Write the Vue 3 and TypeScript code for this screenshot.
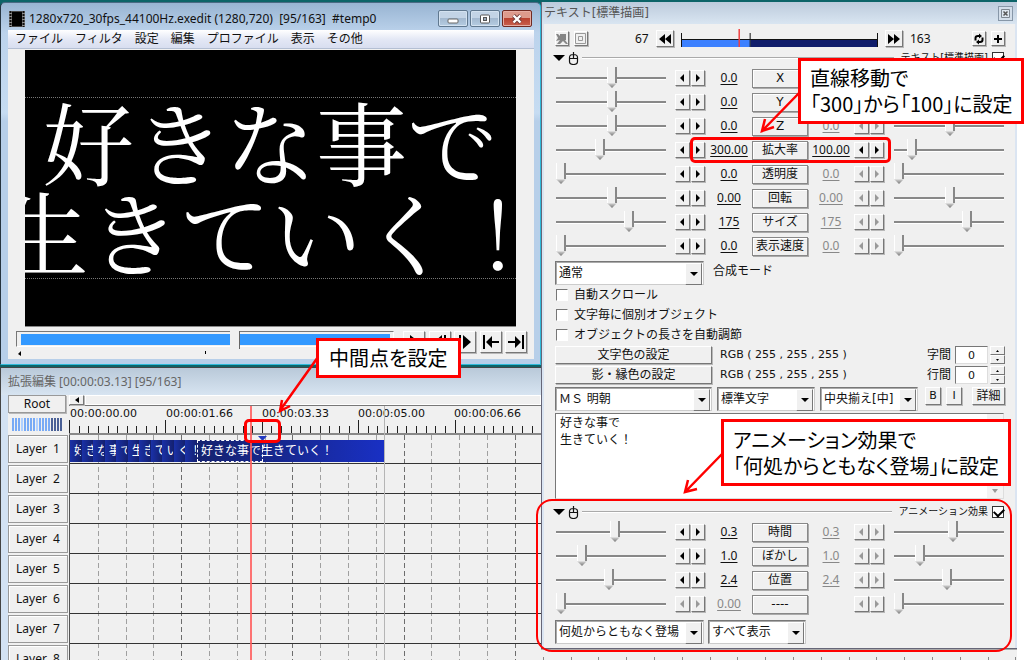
<script setup lang="ts">
import { ref } from 'vue'

interface Param {
  name: string
  left: string
  right: string
  leftPos: number
  rightPos: number
  leftOn: boolean
  rightOn: boolean
}

const p = (name: string, left: string, right: string, leftPos: number, rightPos: number, leftOn = true, rightOn = false): Param =>
  ({ name, left, right, leftPos, rightPos, leftOn, rightOn })

const drawParams = ref<Param[]>([
  p('X', '0.0', '0.0', 51, 51),
  p('Y', '0.0', '0.0', 51, 51),
  p('Z', '0.0', '0.0', 51, 51),
  p('拡大率', '300.00', '100.00', 39, 13, true, true),
  p('透明度', '0.0', '0.0', 0, 0),
  p('回転', '0.00', '0.00', 51, 51),
  p('サイズ', '175', '175', 68, 68),
  p('表示速度', '0.0', '0.0', 0, 0),
])

const animParams = ref<Param[]>([
  p('時間', '0.3', '0.3', 54, 54),
  p('ぼかし', '1.0', '1.0', 21, 21),
  p('位置', '2.4', '2.4', 48, 48),
  p('----', '0.00', '', 0, 0, false),
])

const sections = [
  { id: 'draw', params: drawParams },
  { id: 'anim', params: animParams },
]

const menus = ['ファイル', 'フィルタ', '設定', '編集', 'プロファイル', '表示', 'その他']
const checks = ['自動スクロール', '文字毎に個別オブジェクト', 'オブジェクトの長さを自動調節']
const colors = [
  { name: '文字色の設定', rgb: 'RGB ( 255 , 255 , 255 )', gap: '字間' },
  { name: '影・縁色の設定', rgb: 'RGB ( 255 , 255 , 255 )', gap: '行間' },
]
const times = ['00:00:00.00', '00:00:01.66', '00:00:03.33', '00:00:05.00', '00:00:06.66']
const layers = [1, 2, 3, 4, 5, 6, 7, 8]
const clipChars = [...'好きな事で生きていく！']
const ticks = Array.from({ length: 160 }, (_, i) => ({ x: Math.round(i * 9.64) + 1, major: i % 10 === 0 }))
const guides = Array.from({ length: 50 }, (_, i) => ({ x: Math.round((i + 1) * 27.8), strong: i % 4 === 3 }))
const gauge = Array.from({ length: 17 }, (_, i) => i)
</script>

<template>
  <main class="desktop">
    <div class="left">
      <section class="win preview">
        <header class="titlebar">
          <svg class="film" width="16" height="16" viewBox="0 0 16 16">
            <rect width="16" height="16" fill="#8c8c8c" />
            <rect x="3" y="1" width="10" height="14" fill="#000" />
            <path d="M1.5 0v16M14.5 0v16" stroke="#111" stroke-width="2" stroke-dasharray="2 1" />
            <path d="M3 .5h10M3 15.5h10" stroke="#444" />
          </svg>
          <h1>1280x720_30fps_44100Hz.exedit (1280,720)&nbsp; [95/163]&nbsp; #temp0</h1>
          <div class="sysbtns">
            <button aria-label="最小化"><svg width="12" height="10"><rect x="1" y="5" width="10" height="4" rx="1" fill="#fff" stroke="#666" /></svg></button>
            <button aria-label="最大化"><svg width="12" height="10"><rect x="1.5" y="1" width="9" height="8" rx="1" fill="#fff" stroke="#555" /><rect x="4.5" y="3.5" width="3" height="3" fill="#9ab" stroke="#555" /></svg></button>
            <button class="close" aria-label="閉じる"><svg width="12" height="10"><path d="M2.5 1.5l7 7M9.5 1.5l-7 7" stroke="#6b3a3a" stroke-width="4" /><path d="M2.5 1.5l7 7M9.5 1.5l-7 7" stroke="#fff" stroke-width="2.4" /></svg></button>
          </div>
        </header>
        <nav class="menu"><a v-for="m in menus" :key="m" href="#">{{ m }}</a></nav>
        <div class="client">
          <div class="canvas">
            <div class="frame">
              <p>好きな事で</p>
              <p>生きていく！</p>
            </div>
          </div>
          <div class="transport">
            <div class="seekbox">
              <input class="seek" type="range" min="0" max="163" value="95" aria-label="再生位置" />
              <svg class="marks" width="100%" height="10"><path d="M5 2v5l-3-2z" fill="#000" /><path d="M189.5 2v3" stroke="#000" /></svg>
            </div>
            <div class="plays">
              <button aria-label="再生"><svg width="20" height="20"><path d="M6 3l9 7-9 7z" /></svg></button>
              <button aria-label="前のフレーム"><svg width="20" height="20"><path d="M12 3v14l-8-7zM14 3h2v14h-2z" /></svg></button>
              <button class="tight" aria-label="次のフレーム"><svg width="20" height="20"><path d="M8 3v14l8-7zM4 3h2v14h-2z" /></svg></button>
              <button aria-label="先頭へ"><svg width="20" height="20"><path d="M2 3h2v14h-2zM5 10l6-6v5h7v2h-7v5z" /></svg></button>
              <button class="tight" aria-label="末尾へ"><svg width="20" height="20"><path d="M16 3h2v14h-2zM15 10l-6-6v5h-7v2h7v5z" /></svg></button>
            </div>
          </div>
        </div>
      </section>

      <section class="win timeline">
        <header class="tltitle"><h2>拡張編集 [00:00:03.13] [95/163]</h2></header>
        <div class="tlbody">
          <div class="side">
            <button class="root">Root</button>
            <div class="gauge"><i v-for="g in gauge" :key="g" :class="{ dark: g > 12, pale: g % 5 === 3 }"></i></div>
            <button v-for="n in layers" :key="n" class="layer">Layer&nbsp; {{ n }}</button>
          </div>
          <div class="tracks">
            <div class="hscroll"><button aria-label="左へスクロール"><svg width="8" height="8"><path d="M6 1v6l-4-3z" /></svg></button><span></span></div>
            <div class="ruler">
              <div class="times"><time v-for="t in times" :key="t">{{ t }}</time></div>
              <svg class="ticks" width="100%" height="13"><path v-for="t in ticks" :key="t.x" :d="`M${t.x - 0.5} ${t.major ? 0 : 6}V13`" stroke="#222" /></svg>
            </div>
            <div class="rows">
              <svg class="guides" width="100%" height="100%"><line v-for="g in guides" :key="g.x" :x1="g.x + 0.5" :x2="g.x + 0.5" y1="0" y2="600" :stroke="g.strong ? '#6d6d6d' : '#a0a0a0'" stroke-dasharray="5 3" /></svg>
              <div v-for="n in layers" :key="n" class="track" :class="{ first: n === 1 }">
                <div v-if="n === 1" class="clip">
                  <span class="seg"><b v-for="(c, i) in clipChars" :key="i"><em>{{ c }}</em></b></span>
                  <span class="tail"><span class="dash"></span>好きな事で生きていく！</span>
                </div>
              </div>
            </div>
            <svg class="cursor" width="100%" height="100%"><path d="M315.5 0V600" stroke="#b5b5b5" /><rect x="181" y="0" width="2" height="600" fill="#ff5c5c" fill-opacity=".85" /><path d="M189 30h9l-4.5 5z" fill="#2038c0" /></svg>
          </div>
        </div>
      </section>
    </div>

    <div class="right">
      <section class="panel">
        <header class="ptitle">
          <h2>テキスト[標準描画]</h2>
          <button aria-label="閉じる"><svg width="9" height="9"><path d="M.5.5h8v8h-8z" fill="#dde6ef" stroke="#7d8690" /><path d="M2.5 2.5l4 4M6.5 2.5l-4 4" stroke="#555" stroke-width="1.5" /></svg></button>
        </header>
        <div class="pbody">
          <div class="navrow">
            <button class="sq" aria-label="カメラ制御"><svg width="12" height="12"><path d="M0 1h2l2 2V1h6v6h-1l3 4h-2l-3-3-3 3H1l3-4L0 8l2-3z" fill="#858585" /></svg></button>
            <button class="sq" aria-label="上のオブジェクトでクリッピング"><svg width="12" height="12" fill="none" stroke="#999"><path d="M.5.5h10v10h-10zM3.5 3.5h4v4h-4z" /></svg></button>
            <output class="from">67</output>
            <button class="jump" aria-label="前の中間点"><svg width="14" height="14"><path d="M7 2v10l-6-5zM13 2v10l-6-5z" /></svg></button>
            <svg class="range" width="100%" height="19" viewBox="0 0 198 19" preserveAspectRatio="none">
              <path d="M0 10h70v8H0z" fill="#3c80ff" /><path d="M70 10h128v8H70z" fill="#101d6b" />
              <path d="M.5 4v14M69.5 4v14M197.5 4v14M0 10.5h198" stroke="#111" fill="none" /><path d="M58.5 0v18" stroke="#f04040" stroke-width="1.5" />
            </svg>
            <button class="jump" aria-label="次の中間点"><svg width="14" height="14"><path d="M1 2v10l6-5zM7 2v10l6-5z" /></svg></button>
            <output class="to">163</output>
            <button class="sq" aria-label="更新"><svg width="12" height="12" fill="none" stroke="#000" stroke-width="2"><path d="M2.5 7.5V5Q2.5 3 5 3H6M9.5 4.5V7Q9.5 9 7 9H6" /><path d="M6 .5v5l3-2.5zM6 6.5v5l-3-2.5z" fill="#000" stroke="none" /></svg></button>
            <button class="sq" aria-label="フィルタを追加"><svg width="12" height="12"><path d="M5 2h2v3h3v2h-3v3h-2v-3h-3v-2h3z" /></svg></button>
          </div>

          <template v-for="s in sections" :key="s.id">
            <div class="sechead">
              <svg width="28" height="14"><path d="M0 4h12l-6 6z" /><path d="M16.5 6.500q0-3 4-3t4 3v4q0 3-4 3t-4-3zM16.5 7.5h8M20.5 1v6" fill="none" stroke="#111" stroke-width="1.2" /></svg>
              <hr />
              <label :for="s.id + '-on'">{{ s.id === 'draw' ? 'テキスト[標準描画]' : 'アニメーション効果' }}</label>
              <input :id="s.id + '-on'" type="checkbox" checked />
            </div>
            <div v-for="r in s.params.value" :key="r.name" class="param">
              <input v-model="r.leftPos" class="slide" type="range" :aria-label="r.name + ' 開始'" />
              <span class="pair" :class="{ off: !r.leftOn }"><button :disabled="!r.leftOn" aria-label="減らす"><svg width="8" height="10"><path d="M6 1v8l-4-4z" /></svg></button><button :disabled="!r.leftOn" aria-label="増やす"><svg width="8" height="10"><path d="M2 1v8l4-4z" /></svg></button></span>
              <output :class="{ off: !r.leftOn }"><u>{{ r.left }}</u></output>
              <button class="pname">{{ r.name }}</button>
              <output :class="{ off: !r.rightOn }"><u>{{ r.right }}</u></output>
              <span class="pair" :class="{ off: !r.rightOn }"><button :disabled="!r.rightOn" aria-label="減らす"><svg width="8" height="10"><path d="M6 1v8l-4-4z" /></svg></button><button :disabled="!r.rightOn" aria-label="増やす"><svg width="8" height="10"><path d="M2 1v8l4-4z" /></svg></button></span>
              <input v-model="r.rightPos" class="slide" type="range" :aria-label="r.name + ' 終了'" />
            </div>

            <template v-if="s.id === 'draw'">
              <div class="blend">
                <span class="combo wide"><select id="blend"><option>通常</option></select></span>
                <label for="blend">合成モード</label>
              </div>
              <label v-for="c in checks" :key="c" class="check"><input type="checkbox" />{{ c }}</label>
              <div v-for="c in colors" :key="c.name" class="colorrow">
                <button class="pick">{{ c.name }}</button>
                <span class="rgb">{{ c.rgb }}</span>
                <label :for="c.gap">{{ c.gap }}</label>
                <input :id="c.gap" type="text" value="0" />
                <span class="spin"><button :aria-label="c.gap + ' 増'"><svg width="5" height="4"><path d="M1 3h3l-1.5-2z" /></svg></button><button :aria-label="c.gap + ' 減'"><svg width="5" height="4"><path d="M1 1h3l-1.5 2z" /></svg></button></span>
              </div>
              <div class="fontrow">
                <span class="combo face"><select aria-label="フォント"><option>ＭＳ 明朝</option></select></span>
                <span class="combo style"><select aria-label="文字装飾"><option>標準文字</option></select></span>
                <span class="combo style"><select aria-label="文字揃え"><option>中央揃え[中]</option></select></span>
                <button class="bi">B</button><button class="bi">I</button><button class="more">詳細</button>
              </div>
              <div class="editor">
                <textarea aria-label="テキスト">好きな事で
生きていく！</textarea>
                <div class="vscroll"><svg width="8" height="6"><path d="M1 5h6l-3-4z" /></svg><svg width="8" height="6"><path d="M1 1h6l-3 4z" /></svg></div>
              </div>
            </template>
          </template>

          <div class="animrow">
            <span class="combo wide"><select aria-label="効果の種類"><option>何処からともなく登場</option></select></span>
            <span class="combo style"><select aria-label="表示対象"><option>すべて表示</option></select></span>
          </div>
        </div>
      </section>
      <div class="under"><svg width="100%" height="14"><line v-for="g in guides" :key="g.x" :x1="g.x - 25.5" :x2="g.x - 25.5" y1="7" y2="11" stroke="#888" /></svg></div>
    </div>

    <aside class="notes">
      <div class="mark m1"></div>
      <div class="mark m2"></div>
      <div class="mark m3"></div>
      <p class="note n1">中間点を設定</p>
      <p class="note n2">直線移動で<br />「300」から「100」に設定</p>
      <p class="note n3">アニメーション効果で<br />「何処からともなく登場」に設定</p>
      <svg class="arrows" width="100%" height="100%" fill="none" stroke="#f00" stroke-width="2.5">
        <path d="M318 357L281 409M282 400L280 411L290 406" />
        <path d="M800 92L763 130M765 119L762 131L774 127" />
        <path d="M723 453L686 491M688 480L685 492L697 489" />
      </svg>
    </aside>
  </main>
</template>

<style>
html, body { margin: 0; background: #fff; }
</style>

<style scoped>
* { box-sizing: border-box; }
.desktop {
  position: relative; display: grid; grid-template-columns: minmax(0, 541fr) minmax(0, 476fr) 7px;
  height: 100vh; overflow: hidden; background: linear-gradient(90deg, transparent calc(100% - 7px), #fff 0), #0c6468;
  font: 12px/16px "DejaVu Sans", "Noto Sans CJK JP", sans-serif; color: #111;
}
h1, h2, p { margin: 0; font: inherit; }
button, input, select, textarea { margin: 0; padding: 0; font: inherit; color: inherit; border-radius: 0; }
button {
  display: flex; align-items: center; justify-content: center; background: #f0f0f0;
  border: 1px solid; border-color: #fff #777 #777 #fff; box-shadow: 1px 1px 0 #b8b8b8;
}
svg { display: block; flex: none; }
.left { display: flex; flex-direction: column; padding-top: 2px; gap: 2px; background: #0c6468; min-width: 0; }

/* preview window */
.preview {
  flex: none; border: 1px solid; border-color: #4a6a84 #2fb9d8 #2fb9d8 #26343f; border-radius: 5px 5px 0 0;
  padding: 0 6px 5px 7px; background: linear-gradient(#98b4d2, #bcd3ec 30px, #c6dcf2 110px, #b7cfe9 118px);
}
.titlebar { display: flex; align-items: center; height: 27px; padding-top: 4px; gap: 4px; }
.titlebar h1 { font-family: "Noto Sans", sans-serif; flex: 1; white-space: nowrap; }
.film { margin-left: 1px; }
.sysbtns { display: flex; gap: 2px; margin-right: 2px; }
.sysbtns button { width: 30px; height: 17px; border: 1px solid #60788f; border-radius: 2px; box-shadow: inset 0 0 0 1px #d3e2f0; background: linear-gradient(#c3d4e6 50%, #a3b9d0 50%, #b5cce2); }
.sysbtns .close { background: linear-gradient(#dd9a8c 50%, #b94230 50%, #c9604e); border-color: #702a22; box-shadow: inset 0 0 0 1px #e6ada3; }
.menu { display: flex; gap: 12px; height: 19px; padding: 1px 7px; background: linear-gradient(#fff, #e4e8f5 50%, #d8def0); border-bottom: 1px solid #b4bfd3; }
.menu a { color: #111; text-decoration: none; white-space: nowrap; }
.client { background: #f0f0f0; padding: 1px 0 0; height: 310px; }
.canvas { margin: 0 18px 0 17px; height: 277px; padding-top: 47px; background: #000; border-bottom: 1px solid #888; overflow: hidden; }
.frame { border: dotted #777; border-width: 1px 0; }
.frame p { display: flex; justify-content: center; height: 90px; color: #fff; font: 400 91px/84px "Noto Serif CJK JP", "Noto Sans CJK JP", serif; white-space: nowrap; }
.transport { display: flex; gap: 9px; padding: 4px 7px 0 8px; }
.seekbox { flex: 1; min-width: 0; }
.seek { display: block; appearance: none; width: 100%; height: 16px; border: 1px solid; border-color: #777 #fff #fff #777; padding: 2px 3px 1px 4px; background: linear-gradient(#3399ff, #3399ff) content-box #fff; }
.seek::-webkit-slider-thumb { appearance: none; width: 10px; height: 18px; background: linear-gradient(90deg, #f0f0f0 9px, #666 9px); }
.marks { margin-top: 2px; }
.plays { display: flex; gap: 4px; }
.plays button { width: 22px; height: 22px; }
.plays .tight { margin-left: -1px; }

/* timeline window */
.timeline { flex: 1; min-height: 0; display: flex; flex-direction: column; overflow: hidden; border: 1px solid #444; border-width: 1px 0 0 1px; padding-left: 7px; background: #d3e2f3; }
.tltitle { flex: none; height: 27px; margin-left: -7px; padding: 6px 7px; background: linear-gradient(#b9c9d9, #d7e4f1); color: #666; }
.tltitle, .side, .param output, .from, .to { font-family: "Noto Sans", "Noto Sans CJK JP", sans-serif; }
.tlbody { display: grid; grid-template-columns: 60px minmax(0, 1fr); background: #f0f0f0; }
.side { padding-bottom: 4px; }
.root { width: 58px; height: 18px; border: 1px solid #999; }
.gauge { display: flex; gap: 1px; height: 13px; margin: 5px 5px 4px 4px; }
.gauge i { width: 2px; background: #78aaf5; }
.gauge i.pale { background: #b0d0ff; }
.gauge i.dark { background: #4a6096; }
.layer { width: 60px; height: 28px; margin-bottom: 2px; border: 1px solid #999; box-shadow: inset 1px 1px 0 #fff; }
.tracks { position: relative; overflow: hidden; margin-left: 1px; }
.hscroll { display: flex; height: 11px; border-bottom: 1px solid #777; }
.hscroll button { width: 15px; height: 10px; }
.hscroll span { flex: 1; border: 1px solid #fff; margin-left: 1px; }
.ruler { height: 29px; border-bottom: 2px solid #888; }
.times { display: flex; height: 14px; padding-left: 1px; font: 11px/16px "DejaVu Sans", sans-serif; }
.times time { flex: none; width: 96px; white-space: nowrap; }
.ticks { overflow: hidden; }
.rows { position: relative; border-left: 1px solid #555; }
.guides { position: absolute; inset: 0; }
.track { position: relative; height: 30px; border-bottom: 1px solid #333; }
.track.first { height: 29px; padding-top: 5px; }
.clip { display: flex; width: 314px; height: 22px; color: #fff; }
.seg { display: flex; width: 127px; }
.seg b { flex: 1 1 0; min-width: 0; overflow: hidden; font-weight: 400; background: linear-gradient(90deg, #1a31a8, #14206e); padding-left: 4px; }
.seg em { display: block; width: 7px; overflow: hidden; font-style: normal; line-height: 22px; }
.tail { position: relative; flex: 1; padding-left: 4px; line-height: 22px; background: linear-gradient(90deg, #15226f, #172894 50%, #1930c4); white-space: nowrap; overflow: hidden; }
.dash { position: absolute; left: 0; top: 0; width: 66px; height: 22px; border: 1px dashed #fff; }
.cursor { position: absolute; left: 0; top: 11px; z-index: 1; pointer-events: none; }

/* settings panel */
.right { padding-top: 2px; min-width: 0; }
.panel { border: 1px solid #667; border-width: 0 0 1px 1px; background: #dbe5f2; padding: 0 2px; }
.ptitle { display: flex; align-items: center; justify-content: space-between; height: 22px; margin: 0 -2px; padding: 0 4px 0 2px; background: linear-gradient(#bccbdc, #d9e5f1); color: #555; }
.ptitle button { width: 15px; height: 15px; background: #d3deea; border: 1px solid #8797a8; box-shadow: none; }
.pbody { background: #f0f0f0; padding: 4px 10px 4px 11px; }
.navrow { display: flex; align-items: center; height: 21px; }
.sq { width: 14px; height: 15px; margin-right: 5px; flex: none; }
.navrow .sq:last-child { margin-right: 0; }
.from { margin-left: 42px; width: 21px; }
.jump { width: 18px; height: 17px; flex: none; }
.range { flex: 1; width: auto; min-width: 0; margin: 0 7px; }
.to { width: 69px; padding-left: 7px; }
.sechead { display: flex; align-items: center; height: 17px; margin-left: -2px; font-size: 10px; }
.sechead hr { flex: 1; border: 0; border-top: 1px solid #aaa; border-bottom: 1px solid #fff; margin: 0 6px 0 1px; }
.sechead label { margin-right: 4px; }
input[type="checkbox"] { appearance: none; width: 12px; height: 12px; border: 1px solid; border-color: #777 #fff #fff #777; background: #fff; flex: none; }
.sechead input[type="checkbox"] { border-color: #333; margin-right: 1px; position: relative; }
.sechead input:checked::after { content: ""; position: absolute; left: 1px; top: 1px; width: 8px; height: 5px; border: solid #000; border-width: 0 0 2px 2px; transform: rotate(-45deg); }
.param { display: grid; grid-template-columns: minmax(0, 1fr) 31px 46px 56px 46px 31px minmax(0, 1fr); align-items: center; height: 24px; padding: 0 1px; }
.slide { appearance: none; background: none; width: auto; height: 22px; margin-right: 9px; min-width: 0; }
.slide:last-child { margin: 0 0 0 9px; }
.slide::-webkit-slider-runnable-track { height: 22px; background: linear-gradient(transparent 10px, #888 10px 12px, #fff 12px 13px, transparent 13px); }
.slide::-webkit-slider-thumb { appearance: none; width: 10px; height: 21px; background: linear-gradient(90deg, #fff 1px, #f0f0f0 1px 8px, #888 8px) 0 0 / 100% 16px no-repeat, linear-gradient(#f0f0f0 16px, #c4c4c4 17px, #777 21px); clip-path: polygon(0 0, 100% 0, 100% 76%, 50% 100%, 0 76%); }
.pair { display: flex; height: 17px; }
.pair button { width: 15px; height: 16px; margin-right: 1px; }
.pair.off { fill: #999; }
.param output { text-align: center; }
.param output.off { color: #888; }
.param u { text-underline-offset: 2px; }
.pname { height: 19px; border: 1px solid #888; box-shadow: inset 1px 1px 0 #fff, 1px 1px 0 #aaa; white-space: nowrap; }
.combo { position: relative; display: block; height: 24px; border: 1px solid; border-color: #777 #ccc #ccc #777; box-shadow: inset 1px 1px 0 #aaa; background: #fff; }
.combo select { display: block; appearance: none; width: 100%; height: 22px; border: 0; background: none; padding: 0 0 0 3px; white-space: nowrap; }
.combo::before { content: ""; position: absolute; right: 1px; top: 1px; width: 15px; height: 20px; background: #f0f0f0; border: 1px solid; border-color: #fff #777 #777 #fff; pointer-events: none; }
.combo::after { content: ""; position: absolute; right: 5px; top: 10px; border: solid transparent; border-width: 4px 4px 0; border-top-color: #000; pointer-events: none; }
.wide { flex: 0 0 149px; }
.face { flex: 0 0 157px; }
.style { flex: 0 0 98px; }
.blend { display: flex; gap: 9px; padding-top: 3px; }
.blend label { padding-top: 2px; }
.check { display: flex; align-items: center; gap: 6px; height: 20px; padding-left: 1px; }
.colorrow { display: flex; align-items: center; height: 20px; }
.pick { width: 157px; height: 18px; flex: none; }
.rgb { flex: 1; margin-left: 8px; font-size: 11px; white-space: nowrap; }
.colorrow input { width: 33px; height: 18px; margin: 0 2px 0 4px; text-align: center; border: 1px solid; border-color: #777 #ddd #ddd #777; background: #fff; font-size: 11px; }
.spin { display: flex; flex-direction: column; width: 15px; }
.spin button { height: 9px; box-shadow: none; }
.fontrow { display: flex; gap: 5px; padding-top: 2px; height: 27px; }
.fontrow button { height: 18px; }
.bi { width: 16px; font-size: 11px; margin-left: 2px; }
.bi + .bi { margin-left: 0; }
.more { width: 33px; margin-left: auto; }
.editor { display: flex; height: 86px; margin: 1px 1px 0 0; border: 1px solid; border-color: #777 #ddd #ddd #777; background: #fff; }
.editor textarea { flex: 1; min-width: 0; border: 0; outline: 0; resize: none; overflow: hidden; padding: 1px 4px; line-height: 17px; background: #fff; }
.vscroll { display: flex; flex-direction: column; justify-content: space-between; align-items: center; width: 16px; padding: 4px 0; background: #f3f3f3; fill: #999; }
.editor + .sechead { margin-top: 4px; }
.animrow { display: flex; gap: 4px; padding-top: 4px; }
.under { height: 14px; background: #f0f0f0; border-top: 1px solid #aaa; overflow: hidden; }

/* annotations */
.notes { position: absolute; inset: 0; pointer-events: none; z-index: 2; }
.note { position: absolute; background: #fff; border: 3px solid #f00; color: #000; font: 20px/26px "Noto Sans CJK JP", sans-serif; font-feature-settings: "palt"; white-space: nowrap; }
.n1 { left: 316px; top: 338px; width: 145px; height: 40px; padding: 4px 10px; }
.n2 { left: 798px; top: 58px; width: 226px; height: 66px; padding: 4px 9px; }
.n3 { left: 721px; top: 419px; width: 290px; height: 67px; padding: 5px 9px; }
.mark { position: absolute; border: 3px solid #f00; border-radius: 5px; }
.m1 { left: 244px; top: 419px; width: 37px; height: 24px; }
.m2 { left: 690px; top: 137px; width: 201px; height: 26px; }
.m3 { left: 536px; top: 499px; width: 476px; height: 153px; border-width: 2px; border-radius: 16px; }
.arrows { position: absolute; inset: 0; }
</style>
